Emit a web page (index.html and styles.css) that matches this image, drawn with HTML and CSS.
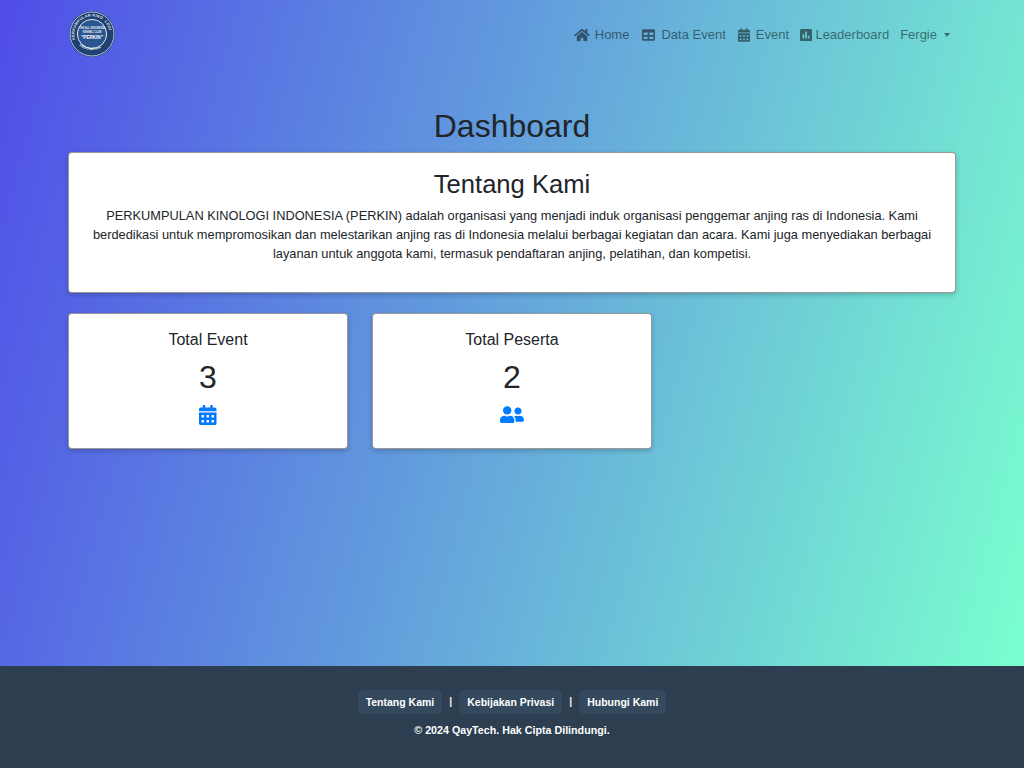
FILE: index.html
```html
<!DOCTYPE html>
<html lang="id">
<head>
<meta charset="utf-8">
<title>Dashboard</title>
<link rel="stylesheet" href="styles.css">
</head>
<body>
<nav class="navbar">
  <a class="brand" href="#">
    <svg class="logo" viewBox="0 0 46 46">
      <defs>
        <path id="arc-left" d="M6.2 28.5A17.6 17.6 0 0 1 10.6 10.6"/>
        <path id="arc-top" d="M11.5 9.7A17.6 17.6 0 0 1 34.5 9.7"/>
        <path id="arc-right" d="M35.4 10.6A17.6 17.6 0 0 1 39.8 28.5"/>
        <path id="arc-bottom" d="M7.9 32.5A20.6 20.6 0 0 0 38.1 32.5"/>
      </defs>
      <circle cx="23" cy="23" r="23" fill="#1f4070"/>
      <circle cx="23" cy="23" r="22" fill="none" stroke="#c4d2e3" stroke-width=".9"/>
      <circle cx="23" cy="23" r="14.6" fill="#2a5590" stroke="#e4ebf3" stroke-width="1"/>
      <text class="logo-ring"><textPath href="#arc-left">PERKUMP</textPath></text>
      <text class="logo-ring"><textPath href="#arc-top">ULAN KINO</textPath></text>
      <text class="logo-ring"><textPath href="#arc-right">LOGI</textPath></text>
      <text class="logo-ring"><textPath href="#arc-bottom" startOffset="10%">INDONESIA</textPath></text>
      <text class="logo-small" x="23" y="18.4" text-anchor="middle">THE ALL INDONESIA</text>
      <text class="logo-small" x="23" y="22.4" text-anchor="middle">KENNEL CLUB</text>
      <text class="logo-main" x="23" y="28.4" text-anchor="middle">"PERKIN"</text>
    </svg>
  </a>
  <ul class="nav-links">
    <li class="nav-home"><a href="#"><svg class="ni ni-home" viewBox="0 0 576 512"><path d="M280.37 148.26L96 300.11V464a16 16 0 0 0 16 16l112.06-.29a16 16 0 0 0 15.92-16V368a16 16 0 0 1 16-16h64a16 16 0 0 1 16 16v95.64a16 16 0 0 0 16 16.05L464 480a16 16 0 0 0 16-16V300L295.67 148.26a12.19 12.19 0 0 0-15.3 0zM571.6 251.47L488 182.56V44.05a12 12 0 0 0-12-12h-56a12 12 0 0 0-12 12v72.61L318.47 43a48 48 0 0 0-61 0L4.34 251.47a12 12 0 0 0-1.6 16.9l25.5 31A12 12 0 0 0 45.15 301l235.22-193.74a12.19 12.19 0 0 1 15.3 0L530.9 301a12 12 0 0 0 16.9-1.6l25.5-31a12 12 0 0 0-1.7-16.93z"/></svg>Home</a></li>
    <li><a href="#"><svg class="ni ni-table" viewBox="0 0 512 512"><path d="M464 32H48C21.49 32 0 53.49 0 80v352c0 26.51 21.49 48 48 48h416c26.51 0 48-21.49 48-48V80c0-26.51-21.49-48-48-48zM224 416H64v-96h160v96zm0-160H64v-96h160v96zm224 160H288v-96h160v96zm0-160H288v-96h160v96z"/></svg>Data Event</a></li>
    <li><a href="#"><svg class="ni ni-cal" viewBox="0 0 448 512"><path d="M0 464c0 26.5 21.5 48 48 48h352c26.5 0 48-21.5 48-48V192H0v272zm320-196c0-6.6 5.4-12 12-12h40c6.6 0 12 5.4 12 12v40c0 6.6-5.4 12-12 12h-40c-6.6 0-12-5.4-12-12v-40zm0 128c0-6.6 5.4-12 12-12h40c6.6 0 12 5.4 12 12v40c0 6.6-5.4 12-12 12h-40c-6.6 0-12-5.4-12-12v-40zM192 268c0-6.6 5.4-12 12-12h40c6.6 0 12 5.4 12 12v40c0 6.6-5.4 12-12 12h-40c-6.6 0-12-5.4-12-12v-40zm0 128c0-6.6 5.4-12 12-12h40c6.6 0 12 5.4 12 12v40c0 6.6-5.4 12-12 12h-40c-6.6 0-12-5.4-12-12v-40zM64 268c0-6.6 5.4-12 12-12h40c6.6 0 12 5.4 12 12v40c0 6.6-5.4 12-12 12H76c-6.6 0-12-5.4-12-12v-40zm0 128c0-6.6 5.4-12 12-12h40c6.6 0 12 5.4 12 12v40c0 6.6-5.4 12-12 12H76c-6.6 0-12-5.4-12-12v-40zM400 64h-48V16c0-8.8-7.2-16-16-16h-32c-8.8 0-16 7.2-16 16v48H160V16c0-8.8-7.2-16-16-16h-32c-8.8 0-16 7.2-16 16v48H48C21.5 64 0 85.5 0 112v48h448v-48c0-26.5-21.5-48-48-48z"/></svg>Event</a></li>
    <li><a href="#"><svg class="ni ni-poll" viewBox="0 0 448 512"><path d="M400 32H48C21.5 32 0 53.5 0 80v352c0 26.5 21.5 48 48 48h352c26.5 0 48-21.5 48-48V80c0-26.5-21.5-48-48-48zM160 368c0 8.84-7.16 16-16 16h-32c-8.84 0-16-7.16-16-16V240c0-8.84 7.16-16 16-16h32c8.84 0 16 7.16 16 16v128zm96 0c0 8.84-7.16 16-16 16h-32c-8.84 0-16-7.16-16-16V144c0-8.84 7.16-16 16-16h32c8.84 0 16 7.16 16 16v224zm96 0c0 8.84-7.16 16-16 16h-32c-8.84 0-16-7.16-16-16v-64c0-8.84 7.16-16 16-16h32c8.84 0 16 7.16 16 16v64z"/></svg>Leaderboard</a></li>
    <li class="nav-user"><a href="#">Fergie<span class="caret"></span></a></li>
  </ul>
</nav>

<main class="content">
  <h1 class="page-title">Dashboard</h1>
  <section class="card about">
    <h2 class="about-title">Tentang Kami</h2>
    <p class="about-text">PERKUMPULAN KINOLOGI INDONESIA (PERKIN) adalah organisasi yang menjadi induk organisasi penggemar anjing ras di Indonesia. Kami berdedikasi untuk mempromosikan dan melestarikan anjing ras di Indonesia melalui berbagai kegiatan dan acara. Kami juga menyediakan berbagai layanan untuk anggota kami, termasuk pendaftaran anjing, pelatihan, dan kompetisi.</p>
  </section>
  <div class="stats">
    <section class="card stat">
      <h5 class="stat-label">Total Event</h5>
      <div class="stat-value">3</div>
      <svg class="stat-icon stat-cal" viewBox="0 0 448 512"><path d="M0 464c0 26.5 21.5 48 48 48h352c26.5 0 48-21.5 48-48V192H0v272zm320-196c0-6.6 5.4-12 12-12h40c6.6 0 12 5.4 12 12v40c0 6.6-5.4 12-12 12h-40c-6.6 0-12-5.4-12-12v-40zm0 128c0-6.6 5.4-12 12-12h40c6.6 0 12 5.4 12 12v40c0 6.6-5.4 12-12 12h-40c-6.6 0-12-5.4-12-12v-40zM192 268c0-6.6 5.4-12 12-12h40c6.6 0 12 5.4 12 12v40c0 6.6-5.4 12-12 12h-40c-6.6 0-12-5.4-12-12v-40zm0 128c0-6.6 5.4-12 12-12h40c6.6 0 12 5.4 12 12v40c0 6.6-5.4 12-12 12h-40c-6.6 0-12-5.4-12-12v-40zM64 268c0-6.6 5.4-12 12-12h40c6.6 0 12 5.4 12 12v40c0 6.6-5.4 12-12 12H76c-6.6 0-12-5.4-12-12v-40zm0 128c0-6.6 5.4-12 12-12h40c6.6 0 12 5.4 12 12v40c0 6.6-5.4 12-12 12H76c-6.6 0-12-5.4-12-12v-40zM400 64h-48V16c0-8.8-7.2-16-16-16h-32c-8.8 0-16 7.2-16 16v48H160V16c0-8.8-7.2-16-16-16h-32c-8.8 0-16 7.2-16 16v48H48C21.5 64 0 85.5 0 112v48h448v-48c0-26.5-21.5-48-48-48z"/></svg>
    </section>
    <section class="card stat">
      <h5 class="stat-label">Total Peserta</h5>
      <div class="stat-value">2</div>
      <svg class="stat-icon stat-users" viewBox="0 0 640 512"><path d="M192 256c61.9 0 112-50.1 112-112S253.9 32 192 32 80 82.1 80 144s50.1 112 112 112zm76.8 32h-8.3c-20.8 10-43.9 16-68.5 16s-47.6-6-68.5-16h-8.3C51.6 288 0 339.6 0 403.2V432c0 26.5 21.5 48 48 48h288c26.5 0 48-21.5 48-48v-28.8c0-63.6-51.6-115.2-115.2-115.2zM480 256c53 0 96-43 96-96s-43-96-96-96-96 43-96 96 43 96 96 96zm48 32h-3.8c-13.9 4.8-28.6 8-44.2 8s-30.3-3.2-44.2-8H432c-20.4 0-39.2 5.9-55.7 15.4 24.4 26.3 39.7 61.2 39.7 99.8v38.4c0 2.2-.5 4.3-.6 6.4H592c26.5 0 48-21.5 48-48 0-61.9-50.1-112-112-112z"/></svg>
    </section>
  </div>
</main>

<footer class="footer">
  <div class="footer-links">
    <a href="#">Tentang Kami</a>
    <span class="sep">|</span>
    <a href="#">Kebijakan Privasi</a>
    <span class="sep">|</span>
    <a href="#">Hubungi Kami</a>
  </div>
  <p class="copyright">© 2024 QayTech. Hak Cipta Dilindungi.</p>
</footer>
</body>
</html>
```
FILE: styles.css
```css
* { box-sizing: border-box; }
html, body { height: 100%; }
body {
  margin: 0;
  min-height: 768px;
  display: flex;
  flex-direction: column;
  font-family: "Liberation Sans", Arial, sans-serif;
  font-size: 12.8px;
  line-height: 1.5;
  color: #212529;
  background: linear-gradient(105deg, #4f4de8 0%, #7affcf 100%) no-repeat;
  background-size: 100% 666px;
}
a { text-decoration: none; }

.navbar {
  display: flex;
  align-items: center;
  justify-content: space-between;
  height: 68px;
  padding: 1px 68px 0 69px;
}
.brand { display: flex; margin-top: -1px; }
.logo { width: 46px; height: 46px; display: block; overflow: visible; }
.logo-ring { font: 700 3.7px "Liberation Sans", sans-serif; fill: #eef3f8; letter-spacing: .3px; }
.logo-small { font: 700 2.6px "Liberation Sans", sans-serif; fill: #e6edf5; }
.logo-main { font: 700 4.6px "Liberation Sans", sans-serif; fill: #fff; }

.nav-links {
  list-style: none;
  display: flex;
  align-items: center;
  margin: 0;
  padding: 0;
  font-size: 13px;
}
.nav-links a {
  display: flex;
  align-items: center;
  color: rgba(0, 0, 0, .5);
  padding: 0 6px;
}
.nav-home { margin-right: 1px; }
.nav-user { margin-left: -1px; }
.ni { height: 14px; fill: currentColor; flex: none; }
.ni-home { width: 16px; margin-right: 5px; }
.ni-table { width: 13px; margin-right: 6px; }
.ni-cal { width: 12px; margin-right: 6px; }
.ni-poll { width: 12px; margin-left: -1px; margin-right: 3.4px; }
.caret {
  width: 0;
  height: 0;
  margin-left: 7px;
  border-top: 4px solid currentColor;
  border-left: 3.5px solid transparent;
  border-right: 3.5px solid transparent;
}

.content { flex: 1; padding: 0 68px; }
.page-title {
  margin: 39px 0 6px;
  font-size: 32px;
  font-weight: 400;
  line-height: 39px;
  text-align: center;
}
.card {
  background: #fff;
  border: 1px solid rgba(0, 0, 0, .4);
  border-radius: 4px;
  box-shadow: 0 2px 5px rgba(0, 0, 0, .2);
}
.about { height: 141px; padding: 16px 16px; text-align: center; }
.about-title { margin: 0 0 6px; font-size: 25.6px; font-weight: 400; line-height: 31px; }
.about-text { margin: 0; font-size: 12.8px; line-height: 19.2px; }

.stats { display: flex; gap: 24px; margin-top: 20px; }
.stat {
  width: 280px;
  height: 136px;
  padding: 16px 16px 0;
  text-align: center;
  display: flex;
  flex-direction: column;
  align-items: center;
}
.stat-label { margin: 0 0 9px; font-size: 16px; font-weight: 400; line-height: 19px; }
.stat-value { font-size: 32px; line-height: 39px; margin-bottom: 8px; }
.stat-icon { fill: #007bff; flex: none; }
.stat-cal { width: 17.5px; height: 20px; }
.stat-users { width: 24px; height: 19.2px; }

.footer {
  height: 102px;
  background: #2c3e50;
  padding-top: 24px;
  color: #fff;
  font-weight: 700;
  font-size: 10.7px;
  text-align: center;
}
.footer-links { display: flex; justify-content: center; align-items: center; gap: 7px; font-size: 10.5px; }
.footer-links a {
  color: #fff;
  background: #34495e;
  border-radius: 5px;
  padding: 0 8px;
  height: 24px;
  line-height: 25px;
}
.sep { color: #ecf0f1; }
.copyright { margin: 8px 0 0; line-height: 16px; }
```
